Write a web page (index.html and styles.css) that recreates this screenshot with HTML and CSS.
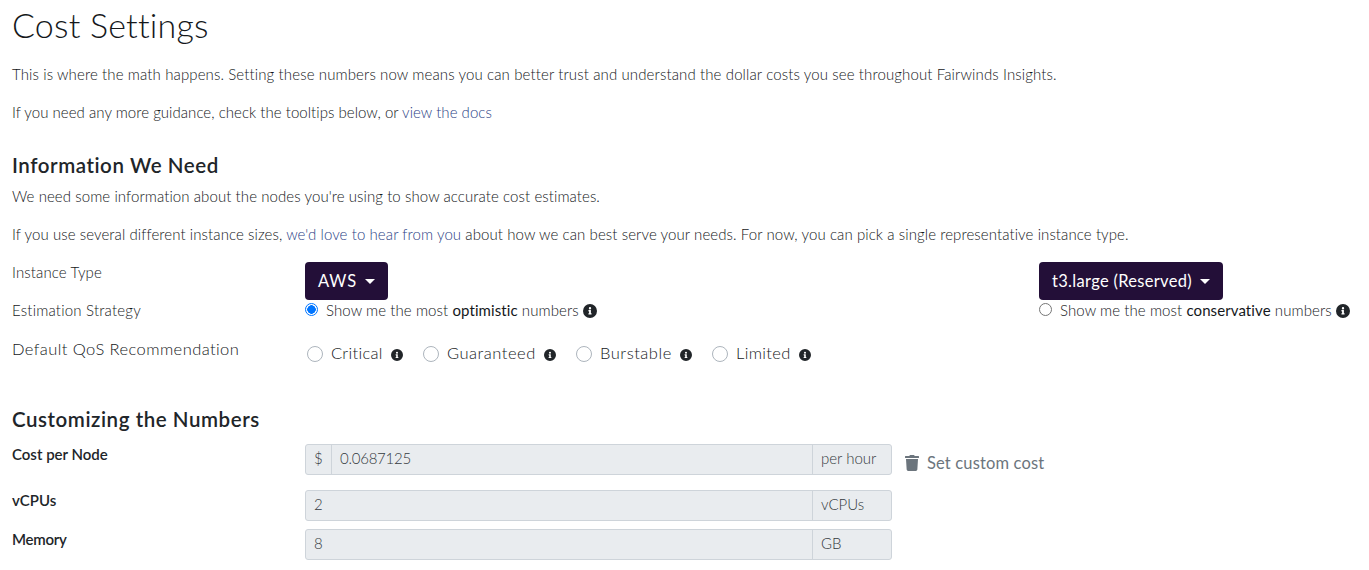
FILE: index.html
```html
<!DOCTYPE html>
<html lang="en">
<head>
<meta charset="utf-8">
<title>Cost Settings</title>
<link rel="stylesheet" href="styles.css">
</head>
<body>
<svg class="sprite" aria-hidden="true">
  <symbol id="info" viewBox="8 8 496 496"><path fill="currentColor" fill-rule="evenodd" d="M256 8a248 248 0 1 0 0 496a248 248 0 1 0 0-496zm0 110a42 42 0 1 1 0 84a42 42 0 1 1 0-84zm56 254c0 7-5 12-12 12h-88c-7 0-12-5-12-12v-24c0-7 5-12 12-12h12v-64h-12c-7 0-12-5-12-12v-24c0-7 5-12 12-12h64c7 0 12 5 12 12v100h12c7 0 12 5 12 12z"/></symbol>
  <symbol id="trash" viewBox="0 0 448 512"><path fill="currentColor" d="M432 32H312l-9-19A24 24 0 0 0 281 0H167a24 24 0 0 0-22 13l-9 19H16A16 16 0 0 0 0 48v32a16 16 0 0 0 16 16h416a16 16 0 0 0 16-16V48a16 16 0 0 0-16-16zM32 128l21 339a48 48 0 0 0 48 45h246a48 48 0 0 0 48-45l21-339z"/></symbol>
</svg>
<main class="page">
  <h1 class="title">Cost Settings</h1>
  <p class="text text-intro">This is where the math happens. Setting these numbers now means you can better trust and understand the dollar costs you see throughout Fairwinds Insights.</p>
  <p class="text text-docs">If you need any more guidance, check the tooltips below, or <a class="link" href="#">view the docs</a></p>

  <h2 class="heading">Information We Need</h2>
  <p class="text">We need some information about the nodes you're using to show accurate cost estimates.</p>
  <p class="text text-sizes">If you use several different instance sizes, <a class="link" href="#">we'd love to hear from you</a> about how we can best serve your needs. For now, you can pick a single representative instance type.</p>

  <div class="row row-type">
    <div class="label">Instance Type</div>
    <div><button class="btn btn-provider" type="button">AWS<i class="caret"></i></button></div>
    <div><button class="btn" type="button">t3.large (Reserved)<i class="caret"></i></button></div>
  </div>
  <div class="row row-strategy">
    <div class="label label-strategy">Estimation Strategy</div>
    <label class="option"><i class="radio radio-on"></i><span>Show me the most <b>optimistic</b> numbers</span><svg class="info"><use href="#info"/></svg></label>
    <label class="option"><i class="radio"></i><span>Show me the most <b>conservative</b> numbers</span><svg class="info"><use href="#info"/></svg></label>
  </div>
  <div class="row row-qos">
    <div class="label label-lg">Default QoS Recommendation</div>
    <div class="choices">
      <label class="choice choice-critical"><i class="ring"></i><span class="choice-name">Critical</span><svg class="info-sm"><use href="#info"/></svg></label>
      <label class="choice choice-guaranteed"><i class="ring"></i><span class="choice-name">Guaranteed</span><svg class="info-sm"><use href="#info"/></svg></label>
      <label class="choice choice-burstable"><i class="ring"></i><span class="choice-name">Burstable</span><svg class="info-sm"><use href="#info"/></svg></label>
      <label class="choice choice-limited"><i class="ring"></i><span class="choice-name">Limited</span><svg class="info-sm"><use href="#info"/></svg></label>
    </div>
  </div>

  <h2 class="heading heading-custom">Customizing the Numbers</h2>
  <div class="row row-cost">
    <div class="label label-strong">Cost per Node</div>
    <div class="field"><span class="addon addon-start">$</span><span class="value">0.0687125</span><span class="addon">per hour</span></div>
    <button class="custom" type="button"><svg class="trash"><use href="#trash"/></svg>Set custom cost</button>
  </div>
  <div class="row row-cpu">
    <div class="label label-strong">vCPUs</div>
    <div class="field"><span class="value">2</span><span class="addon">vCPUs</span></div>
  </div>
  <div class="row">
    <div class="label label-strong label-memory">Memory</div>
    <div class="field"><span class="value">8</span><span class="addon">GB</span></div>
  </div>
</main>
</body>
</html>
```
FILE: styles.css
```css
* { box-sizing: border-box; }
body {
  margin: 0;
  background: #fff;
  color: #15181b;
  font: 300 15px/20px Lato, "Open Sans", sans-serif;
}
.sprite { display: none; }
.page { padding: 4px 12px 0; }
.title { margin: 0 0 18px; font-size: 34px; line-height: 42px; font-weight: 300; letter-spacing: .2px; }
.text { margin: 0 0 18px; white-space: nowrap; letter-spacing: .082px; }
.text-intro { letter-spacing: .12px; }
.text-docs { letter-spacing: .04px; }
.text-sizes { letter-spacing: .09px; }
.link { color: #2c3f86; text-decoration: none; }
.heading { margin: 31px 0 9px; color: #212529; font-size: 20.5px; line-height: 24px; font-weight: 600; letter-spacing: .56px; }
.heading-custom { margin: 31px 0 13px; }
.row { display: grid; grid-template-columns: 293px 734px 1fr; align-items: start; white-space: nowrap; }
.row-type { height: 38px; }
.row-strategy { height: 38px; }
.row-qos { height: 38px; }
.label { letter-spacing: .12px; }
.label-strategy { letter-spacing: .2px; }
.label-lg { font-size: 16.5px; line-height: 22px; letter-spacing: .42px; }
.label-strong { color: #212529; font-weight: 600; letter-spacing: 0; }
.label-memory { letter-spacing: -.28px; }
.btn {
  display: flex; align-items: center; gap: 8px; height: 38px; padding: 0 13px;
  border: 0; border-radius: 4px; background: #230f38; color: #fff;
  font: 400 16.5px/24px Lato, sans-serif; letter-spacing: .31px;
}
.btn-provider { letter-spacing: .87px; }
.caret { border: 5px solid transparent; border-top-color: #fff; border-bottom: 0; }
.option { display: flex; align-items: center; height: 20px; letter-spacing: .09px; }
.radio { flex: none; width: 13px; height: 13px; margin: -1px 8px 0 0; border: 1px solid #767676; border-radius: 50%; }
.radio-on { border-color: #0075ff; background: radial-gradient(circle, #0075ff 4px, #fff 4.5px); }
.info { flex: none; width: 14px; height: 14px; margin: 1px 0 0 4px; color: #212529; }
.choices { display: flex; margin: 5px 0 0 2px; font-size: 16.5px; line-height: 24px; }
.choice { display: flex; align-items: center; letter-spacing: .53px; }
.choice-name { margin-top: -2px; }
.ring { flex: none; width: 16px; height: 16px; margin: -1px 8px 0 0; border: 1px solid #adb5bd; border-radius: 50%; }
.info-sm { flex: none; width: 12px; height: 12px; margin: 1px 0 0 8px; color: #212529; }
.choice-critical { width: 116px; letter-spacing: .3px; }
.choice-guaranteed { width: 153px; }
.choice-burstable { width: 136px; }
.choice-limited { letter-spacing: .35px; }
.field { display: flex; width: 587px; height: 31px; border: 1px solid #ced4da; border-radius: 3px; background: #e9ecef; color: #343a40; line-height: 27px; }
.value { flex: 1; padding-left: 8px; letter-spacing: -.24px; }
.addon { width: 79px; padding-left: 8px; border-left: 1px solid #ced4da; }
.addon-start { width: 26px; border-left: 0; border-right: 1px solid #ced4da; }
.custom { display: flex; align-items: center; margin-top: 7px; padding: 0; border: 0; background: none; color: #6c757d; font: 400 16.5px/24px Lato, sans-serif; letter-spacing: .15px; }
.trash { width: 14px; height: 16px; margin-right: 8px; }
.row-cost { grid-template-columns: 293px 600px 1fr; height: 46px; }
.row-cpu { height: 39px; }
```
